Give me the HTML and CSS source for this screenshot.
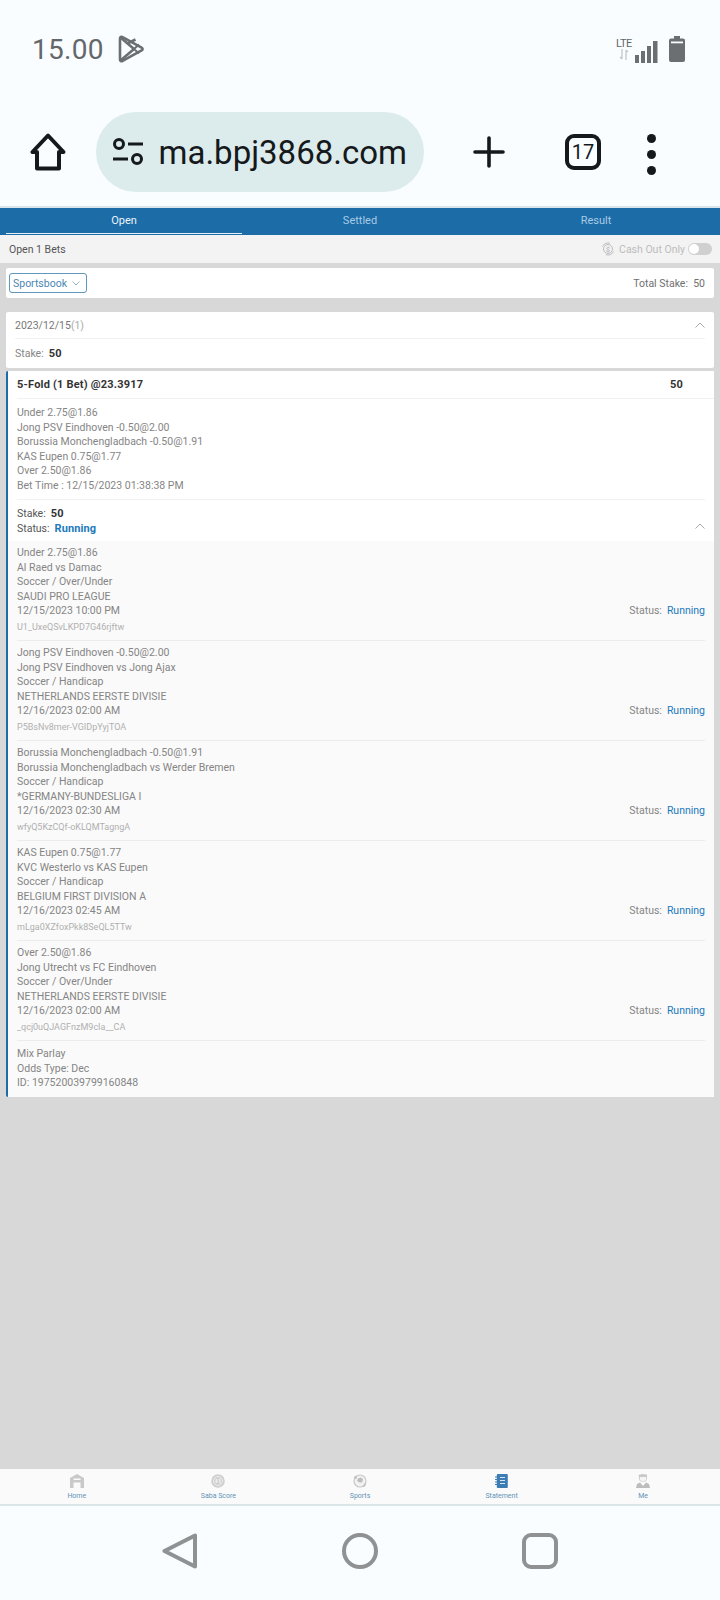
FILE: index.html
```html
<!DOCTYPE html>
<html lang="en">
<head>
<meta charset="utf-8">
<title>Statement</title>
<link rel="stylesheet" href="styles.css">
</head>
<body>
<div class="screen">
  <header class="chrome">
    <div class="status-bar">
      <span class="clock">15.00</span>
      <svg class="play" viewBox="0 0 26 28" fill="none" stroke="#6b6f72" stroke-width="2.6" stroke-linejoin="round"><path d="M2 3.5c0-1.6 1.4-2.2 2.6-1.4L23.6 12.6c1.4.8 1.4 2 0 2.800L4.600 25.900C3.400 26.700 2 26.100 2 24.500Z"/><path d="M2.500 2.500 16 14 2.500 25.500M16 14l-0 0M9.500 8.500 17.500 4.500"/><path d="M16 14l5 4.500M16 14l5-4.500" stroke-width="2"/></svg>
      <span class="spacer"></span>
      <span class="lte"><span class="lte-t">LTE</span><svg class="arrows" viewBox="0 0 12 11" fill="none" stroke="#c4c6c8" stroke-width="1.300"><path d="M4 0v10M2 8l2 2M8 11V1M8 1l2 2"/></svg></span>
      <svg class="signal" viewBox="0 0 23 22" fill="#6b6f72"><rect x="0" y="14" width="4" height="8"/><rect x="6" y="10" width="4" height="12"/><rect x="12" y="5" width="4" height="17"/><rect x="18" y="0" width="4.500" height="22"/></svg>
      <svg class="battery" viewBox="0 0 16 26" fill="#6b6f72"><path d="M5 0h6v2.500h3a2 2 0 0 1 2 2V24a2 2 0 0 1-2 2H2a2 2 0 0 1-2-2V4.500a2 2 0 0 1 2-2h3Z"/><rect x="2" y="5.500" width="12" height="1.800" fill="#f9fdff"/></svg>
    </div>
    <div class="url-bar">
      <svg class="home-ic" viewBox="0 0 36 38" fill="none" stroke="#15191c" stroke-width="4" stroke-linejoin="round"><path d="M18 2.500 2.500 19H7V35.500H29V19H33.500Z"/></svg>
      <div class="pill">
        <svg class="tune" viewBox="0 0 30 28" fill="none" stroke="#15191c" stroke-width="3"><circle cx="6" cy="6" r="4.500"/><path d="M15 6H30M0 21H15"/><circle cx="24" cy="21" r="4.500"/></svg>
        <span class="url-clip"><span class="url">9ma.bpj3868.com</span></span>
      </div>
      <svg class="plus" viewBox="0 0 32 32" stroke="#15191c" stroke-width="3.600" stroke-linecap="round"><path d="M16 2V30M2 16H30"/></svg>
      <span class="tabs-count">17</span>
      <span class="dots"><i></i><i></i><i></i></span>
    </div>
  </header>

  <main class="app">
    <nav class="tabs">
      <span class="tab active">Open</span>
      <span class="tab">Settled</span>
      <span class="tab">Result</span>
    </nav>
    <div class="subbar">
      <span>Open 1 Bets</span>
      <span class="cashout">
        <svg class="coin" viewBox="0 0 14 14" fill="none" stroke="#bdbdbd"><circle cx="7" cy="7" r="4.500"/><path d="M1.500 4.500A6 6 0 0 1 9 1.300M12.500 9.500A6 6 0 0 1 5 12.700"/><text x="7" y="9.600" text-anchor="middle" class="coin-t">$</text></svg>
        <span>Cash Out Only</span>
        <span class="toggle"><i></i></span>
      </span>
    </div>

    <section class="card filter">
      <span class="select">Sportsbook <svg class="chev-d" viewBox="0 0 8 5" fill="none" stroke="#9db4c4"><path d="M.500.500 4 4 7.500.500"/></svg></span>
      <span class="total">Total Stake:&nbsp; 50</span>
    </section>

    <section class="card date-card">
      <div class="date-row">
        <span>2023/12/15<span class="count">(1)</span></span>
        <svg class="chev-u" viewBox="0 0 10 6" fill="none" stroke="#a8a8a8"><path d="M.500 5.500 5 1l4.500 4.500"/></svg>
      </div>
      <div class="date-stake"><span>Stake:</span><b>50</b></div>
    </section>

    <section class="card bet">
      <div class="bet-head"><span>5-Fold (1 Bet) @23.3917</span><span class="bet-amt">50</span></div>
      <div class="bet-summary">
        <div>Under 2.75@1.86</div>
        <div>Jong PSV Eindhoven -0.50@2.00</div>
        <div>Borussia Monchengladbach -0.50@1.91</div>
        <div>KAS Eupen 0.75@1.77</div>
        <div>Over 2.50@1.86</div>
        <div>Bet Time : 12/15/2023 01:38:38 PM</div>
      </div>
      <div class="bet-state">
        <div class="state-lines">
          <div><span>Stake:</span><b>50</b></div>
          <div><span>Status:</span><b class="run">Running</b></div>
        </div>
        <svg class="chev-u" viewBox="0 0 10 6" fill="none" stroke="#a8a8a8"><path d="M.500 5.500 5 1l4.500 4.500"/></svg>
      </div>
      <div class="legs">
        <article class="leg">
          <div class="leg-text"><div>Under 2.75@1.86</div><div>Al Raed vs Damac</div><div>Soccer / Over/Under</div><div>SAUDI PRO LEAGUE</div><div>12/15/2023 10:00 PM</div><div class="ref">U1_UxeQSvLKPD7G46rjftw</div></div>
          <div class="leg-status">Status:<span>Running</span></div>
        </article>
        <article class="leg">
          <div class="leg-text"><div>Jong PSV Eindhoven -0.50@2.00</div><div>Jong PSV Eindhoven vs Jong Ajax</div><div>Soccer / Handicap</div><div>NETHERLANDS EERSTE DIVISIE</div><div>12/16/2023 02:00 AM</div><div class="ref">P5BsNv8mer-VGIDpYyjTOA</div></div>
          <div class="leg-status">Status:<span>Running</span></div>
        </article>
        <article class="leg">
          <div class="leg-text"><div>Borussia Monchengladbach -0.50@1.91</div><div>Borussia Monchengladbach vs Werder Bremen</div><div>Soccer / Handicap</div><div>*GERMANY-BUNDESLIGA I</div><div>12/16/2023 02:30 AM</div><div class="ref">wfyQ5KzCQf-oKLQMTagngA</div></div>
          <div class="leg-status">Status:<span>Running</span></div>
        </article>
        <article class="leg">
          <div class="leg-text"><div>KAS Eupen 0.75@1.77</div><div>KVC Westerlo vs KAS Eupen</div><div>Soccer / Handicap</div><div>BELGIUM FIRST DIVISION A</div><div>12/16/2023 02:45 AM</div><div class="ref">mLga0XZfoxPkk8SeQL5TTw</div></div>
          <div class="leg-status">Status:<span>Running</span></div>
        </article>
        <article class="leg">
          <div class="leg-text"><div>Over 2.50@1.86</div><div>Jong Utrecht vs FC Eindhoven</div><div>Soccer / Over/Under</div><div>NETHERLANDS EERSTE DIVISIE</div><div>12/16/2023 02:00 AM</div><div class="ref">_qcj0uQJAGFnzM9cIa__CA</div></div>
          <div class="leg-status">Status:<span>Running</span></div>
        </article>
        <div class="parlay"><div>Mix Parlay</div><div>Odds Type: Dec</div><div>ID: 197520039799160848</div></div>
      </div>
    </section>

    <span class="grow"></span>

    <nav class="bottom-nav">
      <span class="nav-item">
        <svg class="nav-ic" viewBox="0 0 14 14" fill="#c9c9c9"><path d="M0 4 7 0l7 4v10h-3.500V8.500h-7V14H0ZM3.500 6h7V4.500h-7Z" fill-rule="evenodd"/></svg>
        <span>Home</span>
      </span>
      <span class="nav-item">
        <svg class="nav-ic" viewBox="0 0 14 14"><circle cx="7" cy="7" r="6.800" fill="#cfcfcf"/><circle cx="7" cy="7" r="4.500" fill="none" stroke="#eeeeee"/><path d="M4.500 5h2v4h-2ZM8 4.500h1.500v5H8Z" fill="#eeeeee"/></svg>
        <span>Saba Score</span>
      </span>
      <span class="nav-item">
        <svg class="nav-ic" viewBox="0 0 14 14"><circle cx="7" cy="7" r="6" fill="#f2f2f2" stroke="#c9c9c9" stroke-width="1.200"/><path d="M5 4.500 8 3.500l2 2-1 3H6L4 6.500ZM1 3l2-1.500 1 2.500-2 1ZM11 10l2-1-1 3.500-2 .5Z" fill="#bdbdbd"/></svg>
        <span>Sports</span>
      </span>
      <span class="nav-item">
        <svg class="nav-ic" viewBox="0 0 14 14"><rect x="1.800" y="0" width="11" height="14" rx="1" fill="#3d7db4"/><path d="M0 3h2M0 5.500h2M0 8h2M0 10.500h2" stroke="#3d7db4"/><path d="M5 3.500h5M5 6.500h5M5 9.500h5" stroke="#d5e4f0"/></svg>
        <span>Statement</span>
      </span>
      <span class="nav-item">
        <svg class="nav-ic" viewBox="0 0 14 14"><path d="M2.500 1 6 0l5 .500V3l-.5 3.500L8 8H6L3.500 6.500 3 3.500Z" fill="#c9c9c9"/><path d="M4 3h6v3L8 7.500H6L4 6Z" fill="#f4f4f4"/><path d="M0 14l1-4 3-1.500L7 12l3-3.500 3 1.500 1 4Z" fill="#bdbdbd"/></svg>
        <span>Me</span>
      </span>
    </nav>
  </main>

  <footer class="sys-nav">
    <svg class="sys-ic" viewBox="0 0 36 38" fill="none" stroke="#8f9192" stroke-width="4" stroke-linejoin="round"><path d="M33 3.500v31L2.500 19Z"/></svg>
    <svg class="sys-ic" viewBox="0 0 36 38" fill="none" stroke="#8f9192" stroke-width="4"><circle cx="18" cy="19" r="16"/></svg>
    <svg class="sys-ic" viewBox="0 0 36 38" fill="none" stroke="#8f9192" stroke-width="4"><rect x="2" y="3" width="32" height="32" rx="7"/></svg>
  </footer>
</div>
</body>
</html>
```

FILE: styles.css
```css
* { box-sizing: border-box; }
html, body { margin: 0; padding: 0; }
body { font-family: Roboto, "Liberation Sans", sans-serif; background: #f9fdff; }
.screen { width: 720px; height: 1600px; display: flex; flex-direction: column; overflow: hidden; }

.chrome { height: 208px; background: #f9fdff; border-bottom: 2px solid #d9e5ea; flex: none; }
.status-bar { height: 98px; display: flex; align-items: center; padding: 0 35px 0 32px; }
.clock { font-size: 28px; color: #63676a; letter-spacing: .3px; }
.play { width: 26px; height: 28px; margin-left: 14px; }
.spacer { flex: 1; }
.lte { width: 20px; display: flex; flex-direction: column; align-items: center; margin-top: -1px; }
.lte-t { font-size: 11px; line-height: 11px; color: #63676a; letter-spacing: -.5px; }
.arrows { width: 12px; height: 11px; }
.signal { width: 23px; height: 22px; margin-left: 1px; margin-top: 6px; }
.battery { width: 16px; height: 26px; margin-left: 11px; }
.url-bar { height: 110px; display: flex; align-items: flex-start; padding-top: 14px; }
.home-ic { width: 36px; height: 38px; margin: 21px 0 0 30px; flex: none; }
.pill { width: 328px; height: 80px; margin-left: 30px; border-radius: 40px; background: #dcebeb; display: flex; align-items: center; padding-left: 17px; flex: none; }
.tune { width: 30px; height: 28px; flex: none; }
.url-clip { width: 247px; margin-left: 17px; overflow: hidden; display: flex; justify-content: flex-end; flex: none; }
.url { font-size: 33px; color: #15191c; white-space: nowrap; }
.plus { width: 32px; height: 32px; margin: 24px 0 0 49px; flex: none; }
.tabs-count { width: 36px; height: 36px; margin: 22px 0 0 60px; border: 4px solid #15191c; border-radius: 9px; font-size: 20px; display: flex; align-items: center; justify-content: center; color: #15191c; flex: none; }
.dots { display: flex; flex-direction: column; gap: 7px; margin: 22px 0 0 46px; }
.dots i { width: 9px; height: 9px; border-radius: 50%; background: #15191c; }

.app { flex: 1; background: #d8d8d8; display: flex; flex-direction: column; font-size: 10.5px; color: #858585; min-height: 0; }
.tabs { height: 27px; background: #1c6ca8; display: flex; padding: 0 6px; flex: none; }
.tab { flex: 1; text-align: center; line-height: 26px; font-size: 11px; color: #a9cbe4; }
.tab.active { color: #eaf3fa; border-bottom: 1px solid #e6f0f8; height: 26px; }
.subbar { height: 28px; background: #f3f3f3; display: flex; justify-content: space-between; align-items: center; padding: 0 8px 0 9px; color: #555; flex: none; }
.cashout { display: flex; align-items: center; color: #bcbcbc; }
.coin { width: 14px; height: 14px; margin-right: 4px; }
.coin-t { font-size: 7px; fill: #bdbdbd; stroke: none; font-weight: 700; }
.toggle { width: 24px; height: 12px; margin-left: 3px; border-radius: 6px; background: #d0d0d0; padding: 1px; display: flex; }
.toggle i { width: 10px; height: 10px; border-radius: 50%; background: #fff; }

.card { background: #fff; margin: 0 6px; border-radius: 2px; flex: none; }
.filter { height: 30px; margin-top: 5px; display: flex; justify-content: space-between; align-items: center; padding: 0 9px 0 3px; color: #6f6f6f; }
.select { height: 20px; padding: 0 6px 0 3px; border: 1px solid #5f97bd; border-radius: 3px; display: flex; align-items: center; gap: 5px; color: #4a87b2; font-size: 10.5px; }
.chev-d { width: 8px; height: 5px; }
.chev-u { width: 10px; height: 6px; flex: none; }
.date-card { height: 56px; margin-top: 14px; padding: 0 9px; }
.date-row { height: 27px; display: flex; justify-content: space-between; align-items: center; border-bottom: 1px solid #f1f1f1; color: #777; font-size: 10.5px; }
.count { color: #aaa; }
.date-stake { height: 29px; display: flex; align-items: center; gap: 5px; }
.date-stake b { color: #333; font-size: 11px; font-weight: 700; letter-spacing: .3px; }

.bet { margin-top: 3px; border-left: 2px solid #1c6ca8; border-radius: 2px 0 0 2px; }
.bet-head { height: 28px; margin: 0 0 0 9px; padding-right: 31px; border-bottom: 1px solid #f1f1f1; display: flex; justify-content: space-between; align-items: center; color: #333; font-weight: 700; font-size: 11px; letter-spacing: .2px; }
.bet-summary { height: 101px; margin-left: 9px; margin-right: 9px; padding-top: 7px; line-height: 14.6px; border-bottom: 1px solid #f1f1f1; }
.bet-state { height: 41px; display: flex; justify-content: space-between; align-items: flex-start; padding: 6px 9px 0 9px; color: #555; line-height: 15px; }
.bet-state .chev-u { margin-top: 17px; }
.state-lines b { color: #333; font-size: 11px; margin-left: 5px; letter-spacing: .3px; }
.state-lines b.run { color: #1c79bb; letter-spacing: .1px; }
.legs { background: #fafafa; }
.leg { height: 100px; margin: 0 9px; padding-top: 6px; line-height: 14.6px; border-bottom: 1px solid #ececec; display: flex; justify-content: space-between; align-items: flex-end; }
.leg-text { padding-bottom: 5px; }
.ref { font-size: 9px; color: #b0b0b0; line-height: 16px; }
.leg-status { padding-bottom: 21px; color: #858585; }
.leg-status span { color: #1c79bb; margin-left: 5px; }
.parlay { height: 56px; padding: 6px 9px 0; line-height: 14.6px; }

.grow { flex: 1; }
.bottom-nav { height: 35px; background: #fafafa; display: flex; flex: none; }
.nav-item { width: 141.600px; display: flex; flex-direction: column; align-items: center; padding-top: 5px; font-size: 7px; color: #5f93b8; line-height: 10px; gap: 3px; }
.bottom-nav .nav-item:first-child { margin-left: 6px; }
.nav-ic { width: 14px; height: 14px; display: block; }

.sys-nav { height: 96px; background: #f9fdff; border-top: 2px solid #dbe6e8; display: flex; justify-content: center; gap: 144px; padding-top: 26px; flex: none; }
.sys-ic { width: 36px; height: 38px; }
```
